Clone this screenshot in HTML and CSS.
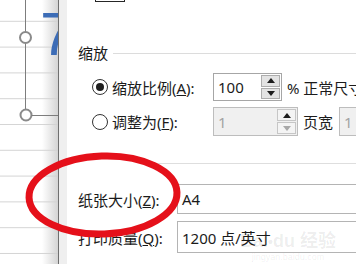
FILE: index.html
```html
<!DOCTYPE html>
<html lang="zh-CN">
<head>
<meta charset="utf-8">
<link rel="stylesheet" href="styles.css">
</head>
<body>
<div class="page">
  <div class="sheet">
    <span class="seven">7</span>
    <svg class="handles" width="58" height="264" viewBox="0 0 58 264">
      <line x1="25.5" y1="0" x2="25.5" y2="109.5" stroke="#7d7d7d" stroke-width="1"/>
      <circle cx="25.5" cy="37.5" r="5.5" fill="#fff" stroke="#8a8a8a" stroke-width="2"/>
      <circle cx="26" cy="115" r="5.5" fill="#fff" stroke="#8a8a8a" stroke-width="2"/>
      <line x1="31.5" y1="115.5" x2="58" y2="115.5" stroke="#7d7d7d" stroke-width="1"/>
    </svg>
  </div>
  <div class="dialog">
    <div class="topbox"></div>
    <div class="group-title"><span>缩放</span><span class="rule"></span></div>
    <div class="radio-row first">
      <span class="radio checked"></span>
      <span class="rlabel">缩放比例(<u>A</u>):</span>
      <div class="spin w69">
        <span class="val">100</span>
        <div class="btns"><span class="b"><i class="up"></i></span><span class="b"><i class="down"></i></span></div>
      </div>
      <span class="after">% 正常尺寸</span>
    </div>
    <div class="radio-row second">
      <span class="radio"></span>
      <span class="rlabel">调整为(<u>F</u>):</span>
      <div class="spin w85 disabled">
        <span class="val">1</span>
        <div class="btns"><span class="b"><i class="up"></i></span><span class="b"><i class="down dim"></i></span></div>
      </div>
      <span class="after">页宽</span>
      <div class="spin w-rest disabled"><span class="val">1</span></div>
    </div>
    <div class="sep"></div>
    <div class="form-row a4">
      <span class="flabel">纸张大小(<u>Z</u>):</span>
      <div class="field"><span class="val">A4</span></div>
    </div>
    <div class="form-row quality">
      <span class="flabel">打印质量(<u>Q</u>):</span>
      <div class="field"><span class="val">1200 点/英寸</span></div>
    </div>
  </div>
  <svg class="ring" width="356" height="264" viewBox="0 0 356 264">
    <ellipse cx="103" cy="195" rx="74" ry="39" fill="none" stroke="#e5101a" stroke-width="7" transform="rotate(-2 103 195)"/>
  </svg>
  <div class="watermark">
    <span class="wm-main">Bai<span class="paw">&#x2022;</span>du 经验</span>
    <span class="wm-url">jingyan.baidu.com</span>
  </div>
</div>
</body>
</html>
```
FILE: styles.css
```css
html, body {
  margin: 0;
  padding: 0;
  background: #fff;
}
.page {
  position: relative;
  width: 356px;
  height: 264px;
  display: flex;
  overflow: hidden;
  font-family: "Noto Sans", "Noto Sans CJK SC", sans-serif;
  font-size: 15px;
  color: #1b1b1b;
}
.sheet {
  position: relative;
  width: 58px;
  height: 264px;
  flex: none;
  border-right: 1px solid #6f6f6f;
  overflow: hidden;
  background:
    linear-gradient(to right, rgba(255,255,255,0) 42px, rgba(210,210,210,0.95) 58px),
    linear-gradient(to bottom, transparent 24.8px, #d4d4d4 24.8px) 0 -4px / 100% 25.8px repeat-y,
    #fff;
}
.seven {
  position: absolute;
  left: 40px;
  top: 3px;
  font-family: "Liberation Sans", sans-serif;
  font-size: 62px;
  line-height: 1;
  color: #3c6cb6;
}
.handles {
  position: absolute;
  left: 0;
  top: 0;
}
.dialog {
  flex: 1;
  border-left: 8px solid #efefef;
  display: flex;
  flex-direction: column;
}
.topbox {
  width: 28px;
  height: 1px;
  margin-left: 28px;
  border: 1px solid #262626;
  border-top: none;
}
.group-title {
  display: flex;
  align-items: center;
  height: 20px;
  line-height: 20px;
  margin-top: 41px;
  padding-left: 11px;
}
.group-title .rule {
  flex: 1;
  height: 1px;
  background: #dcdcdc;
  margin-left: 5px;
}
.radio-row {
  display: flex;
  align-items: center;
  padding-left: 25px;
  height: 28px;
}
.radio-row.first { margin-top: 10px; }
.radio-row.second { margin-top: 6px; height: 29px; }
.radio {
  width: 14px;
  height: 14px;
  border: 1px solid #333;
  border-radius: 50%;
  flex: none;
  display: flex;
  align-items: center;
  justify-content: center;
  background: #fff;
}
.radio.checked::after {
  content: "";
  width: 8px;
  height: 8px;
  border-radius: 50%;
  background: #1e1e1e;
}
.rlabel {
  width: 101px;
  margin-left: 4px;
  white-space: nowrap;
}
.spin {
  box-sizing: border-box;
  height: 100%;
  border: 1px solid #a6a6a6;
  display: flex;
  padding: 1px;
  background: #fff;
  flex: none;
}
.spin.w69 { width: 69px; }
.spin.w85 { width: 85px; }
.spin.w-rest { width: 40px; margin-left: 6px; }
.spin.disabled {
  background: #f0f0f0;
  border-color: #bdbdbd;
  color: #a3a3a3;
}
.val {
  flex: 1;
  padding-left: 3px;
  display: flex;
  align-items: center;
  white-space: nowrap;
}
.btns {
  width: 19px;
  display: flex;
  flex-direction: column;
  gap: 1px;
}
.b {
  flex: 1;
  box-sizing: border-box;
  border: 1px solid #adadad;
  background: #e3e3e3;
  display: flex;
  align-items: center;
  justify-content: center;
}
.disabled .b {
  background: #f4f4f4;
  border-color: #c6c6c6;
}
.up {
  width: 0; height: 0;
  border-left: 4px solid transparent;
  border-right: 4px solid transparent;
  border-bottom: 5px solid #1e1e1e;
}
.down {
  width: 0; height: 0;
  border-left: 4px solid transparent;
  border-right: 4px solid transparent;
  border-top: 5px solid #1e1e1e;
}
.down.dim { border-top-color: #a8a8a8; }
.after {
  margin-left: 5px;
  white-space: nowrap;
}
.sep {
  height: 1px;
  margin-top: 27px;
  margin-left: 74px;
  background: #dedede;
}
.form-row {
  display: flex;
  align-items: center;
  padding-left: 11px;
}
.form-row.a4 { margin-top: 20px; height: 30px; }
.form-row.quality { margin-top: 7px; height: 32px; }
.flabel {
  width: 99px;
  flex: none;
  white-space: nowrap;
}
.field {
  flex: 1;
  height: 100%;
  box-sizing: border-box;
  border: 1px solid #b4b4b4;
  border-right: none;
  display: flex;
  padding-left: 1px;
}
.ring {
  position: absolute;
  left: 0;
  top: 0;
}
.watermark {
  position: absolute;
  left: 240px;
  top: 232px;
  display: flex;
  flex-direction: column;
  align-items: center;
  color: rgba(0,0,0,0.08);
  line-height: 1;
}
.wm-main {
  font-family: "Liberation Sans", "Noto Sans CJK SC", sans-serif;
  font-size: 18px;
  font-weight: bold;
}
.paw { font-size: 14px; }
.wm-url {
  font-family: "Liberation Sans", sans-serif;
  font-size: 9px;
  margin-top: 3px;
}
```
